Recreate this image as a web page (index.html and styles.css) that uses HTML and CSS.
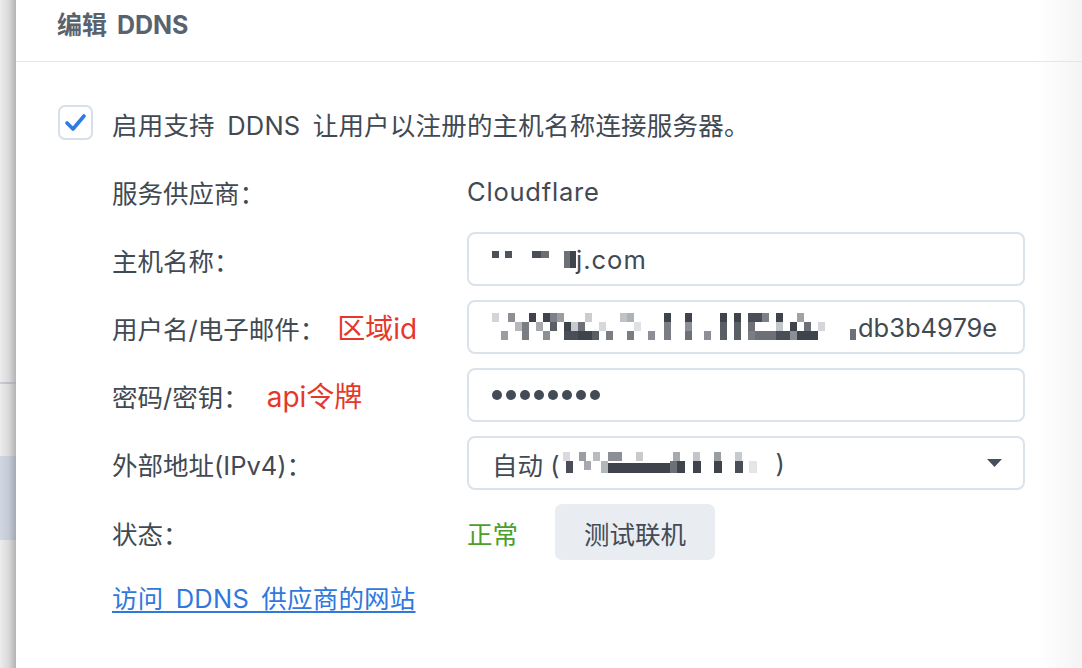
FILE: index.html
```html
<!DOCTYPE html>
<html lang="zh-CN">
<head>
<meta charset="utf-8">
<title>编辑 DDNS</title>
<link rel="stylesheet" href="styles.css">
</head>
<body>
<div class="page">
  <div class="side">
    <div class="side-a"></div>
    <div class="side-line"></div>
    <div class="side-b"></div>
    <div class="side-sel"></div>
    <div class="side-c"></div>
  </div>
  <div class="dialog">
    <div class="header">编辑 DDNS</div>
    <div class="content">
      <div class="check-row">
        <span class="checkbox">
          <svg width="25" height="25" viewBox="0 0 25 25"><path d="M4 13 L10 19 L21 6" fill="none" stroke="#2f7be0" stroke-width="3.6" stroke-linecap="round" stroke-linejoin="round"/></svg>
        </span>
        <span class="check-text">启用支持 DDNS 让用户以注册的主机名称连接服务器。</span>
      </div>

      <div class="form">
        <div class="label">服务供应商：</div>
        <div class="value">Cloudflare</div>

        <div class="label">主机名称：</div>
        <div class="field">
          <svg class="redact" width="84" height="22" viewBox="0 0 84 22">
            <rect x="0" y="3" width="7" height="7" fill="#4b5058"/>
            <rect x="13" y="3" width="7" height="7" fill="#50555d"/>
            <rect x="40" y="3" width="9" height="7" fill="#4a4f57"/>
            <rect x="49" y="3" width="8" height="7" fill="#6a6f76"/>
            <rect x="72" y="3" width="6" height="17" fill="#6c7077"/>
            <rect x="78" y="3" width="6" height="17" fill="#3f444c"/>
          </svg><span class="latin">j.com</span>
        </div>

        <div class="label">用户名/电子邮件：<span class="note note-a">区域id</span></div>
        <div class="field">
          <svg class="redact" width="366" height="28" viewBox="0 0 366 28">
            <rect x="0" y="0" width="7" height="9" fill="#d2d4d7"/>
            <rect x="16" y="0" width="7" height="9" fill="#8c9096"/>
            <rect x="37" y="0" width="7" height="9" fill="#3f444c"/>
            <rect x="51" y="0" width="7" height="9" fill="#3f444c"/>
            <rect x="58" y="0" width="7" height="9" fill="#7d8187"/>
            <rect x="65" y="0" width="7" height="9" fill="#9a9ea3"/>
            <rect x="93" y="0" width="7" height="9" fill="#c9ccd0"/>
            <rect x="128" y="0" width="7" height="9" fill="#bfc2c6"/>
            <rect x="135" y="0" width="7" height="9" fill="#aeb1b5"/>
            <rect x="172" y="0" width="7" height="9" fill="#3f444c"/>
            <rect x="193" y="0" width="7" height="9" fill="#3f444c"/>
            <rect x="228" y="0" width="7" height="9" fill="#3f444c"/>
            <rect x="242" y="0" width="7" height="9" fill="#3f444c"/>
            <rect x="256" y="0" width="14" height="9" fill="#4a4f57"/>
            <rect x="270" y="0" width="7" height="9" fill="#7d8187"/>
            <rect x="284" y="0" width="7" height="9" fill="#3f444c"/>
            <rect x="305" y="0" width="7" height="9" fill="#9fa3a8"/>
            <rect x="23" y="9" width="7" height="9" fill="#b5b8bc"/>
            <rect x="30" y="9" width="7" height="9" fill="#7a7e84"/>
            <rect x="44" y="9" width="7" height="9" fill="#a6a9ad"/>
            <rect x="58" y="9" width="7" height="9" fill="#5a5f66"/>
            <rect x="72" y="9" width="7" height="9" fill="#3f444c"/>
            <rect x="79" y="9" width="7" height="9" fill="#c8cbce"/>
            <rect x="86" y="9" width="7" height="9" fill="#6d7177"/>
            <rect x="107" y="9" width="7" height="9" fill="#d6d8db"/>
            <rect x="142" y="9" width="7" height="9" fill="#dfe1e3"/>
            <rect x="172" y="9" width="7" height="9" fill="#7a7e84"/>
            <rect x="193" y="9" width="7" height="9" fill="#8c9096"/>
            <rect x="228" y="9" width="7" height="9" fill="#5a5f66"/>
            <rect x="242" y="9" width="7" height="9" fill="#5a5f66"/>
            <rect x="256" y="9" width="7" height="9" fill="#6d7177"/>
            <rect x="284" y="9" width="7" height="9" fill="#c3c6ca"/>
            <rect x="298" y="9" width="7" height="9" fill="#3f444c"/>
            <rect x="312" y="9" width="7" height="9" fill="#6d7177"/>
            <rect x="326" y="9" width="7" height="9" fill="#d4d6d9"/>
            <rect x="9" y="18" width="7" height="9" fill="#9a9ea3"/>
            <rect x="30" y="18" width="7" height="9" fill="#7a7e84"/>
            <rect x="51" y="18" width="7" height="9" fill="#8c9096"/>
            <rect x="72" y="18" width="14" height="9" fill="#4a4f57"/>
            <rect x="86" y="18" width="14" height="9" fill="#3f444c"/>
            <rect x="100" y="18" width="7" height="9" fill="#5a5f66"/>
            <rect x="114" y="18" width="7" height="9" fill="#7a7e84"/>
            <rect x="135" y="18" width="7" height="9" fill="#7a7e84"/>
            <rect x="156" y="18" width="7" height="9" fill="#8c9096"/>
            <rect x="172" y="18" width="7" height="9" fill="#7a7e84"/>
            <rect x="193" y="18" width="7" height="9" fill="#6d7177"/>
            <rect x="212" y="18" width="7" height="9" fill="#8c9096"/>
            <rect x="228" y="18" width="7" height="9" fill="#5a5f66"/>
            <rect x="242" y="18" width="7" height="9" fill="#5a5f66"/>
            <rect x="256" y="18" width="7" height="9" fill="#7a7e84"/>
            <rect x="263" y="18" width="21" height="9" fill="#6d7177"/>
            <rect x="284" y="18" width="14" height="9" fill="#4a4f57"/>
            <rect x="298" y="18" width="7" height="9" fill="#8c9096"/>
            <rect x="305" y="18" width="21" height="9" fill="#3f444c"/>
            <rect x="358" y="16" width="6" height="11" fill="#6d7177"/>
          </svg><span>db3b4979e</span>
        </div>

        <div class="label">密码/密钥：<span class="note note-b">api令牌</span></div>
        <div class="field">
          <span class="dots"><i></i><i></i><i></i><i></i><i></i><i></i><i></i><i></i></span>
        </div>

        <div class="label">外部地址(IPv4)：</div>
        <div class="field select">
          <span class="sel-text">自动 (<svg class="redact" width="210" height="26" viewBox="0 0 210 26">
            <rect x="0" y="2" width="7" height="9" fill="#d8dadd"/>
            <rect x="16" y="2" width="7" height="9" fill="#9a9ea3"/>
            <rect x="30" y="2" width="7" height="9" fill="#b8bbbf"/>
            <rect x="45" y="2" width="14" height="9" fill="#8c9096"/>
            <rect x="73" y="2" width="7" height="9" fill="#c8cbce"/>
            <rect x="110" y="2" width="7" height="9" fill="#a6a9ad"/>
            <rect x="130" y="2" width="7" height="9" fill="#c2c5c9"/>
            <rect x="151" y="2" width="7" height="9" fill="#9a9ea3"/>
            <rect x="172" y="2" width="7" height="9" fill="#c8cbce"/>
            <rect x="3" y="11" width="7" height="12" fill="#4a4f57"/>
            <rect x="21" y="11" width="7" height="9" fill="#a6a9ad"/>
            <rect x="38" y="11" width="7" height="12" fill="#b3b6ba"/>
            <rect x="45" y="13" width="62" height="10" fill="#3f444c"/>
            <rect x="107" y="11" width="7" height="12" fill="#6d7177"/>
            <rect x="114" y="11" width="8" height="12" fill="#3f444c"/>
            <rect x="130" y="11" width="8" height="12" fill="#3f444c"/>
            <rect x="151" y="11" width="8" height="12" fill="#3f444c"/>
            <rect x="172" y="11" width="8" height="12" fill="#4a4f57"/>
            <rect x="186" y="11" width="8" height="12" fill="#e3e5e7"/>
          </svg> )</span>
          <svg class="arrow" width="15" height="8" viewBox="0 0 15 8"><path d="M0 0 H15 L7.5 8 Z" fill="#474f5a"/></svg>
        </div>

        <div class="label">状态：</div>
        <div class="status">
          <span class="ok">正常</span>
          <span class="btn">测试联机</span>
        </div>
      </div>

      <a class="link" href="#">访问 DDNS 供应商的网站</a>
    </div>
  </div>
</div>
</body>
</html>
```

FILE: styles.css
```css
html, body {
  margin: 0;
  padding: 0;
}
body {
  font-family: "Inter", "Noto Sans CJK SC", sans-serif;
  color: #414953;
  background: #fff;
}
.page {
  display: flex;
  width: 1082px;
  height: 668px;
  overflow: hidden;
}
.side {
  width: 16px;
  flex: none;
  display: flex;
  flex-direction: column;
}
.side > div {
  background: linear-gradient(to right, #ececec 0%, #d9d9d9 55%, #b3b3b3 100%);
}
.side-a { height: 382px; }
.side-line { height: 2px; background: linear-gradient(to right, #cdd1d6, #a9adb3) !important; }
.side-b { height: 72px; }
.side-sel { height: 84px; background: linear-gradient(to right, #d0d7e1 0%, #c3cad5 55%, #a3a9b4 100%) !important; }
.side-c { flex: 1; }

.dialog {
  flex: 1;
  display: flex;
  flex-direction: column;
  background: linear-gradient(to right, #fff calc(100% - 44px), #f4f4f4 100%);
}
.header {
  height: 62px;
  box-sizing: border-box;
  padding: 9px 0 0 41px;
  font-size: 25px;
  line-height: 32px;
  font-weight: 700;
  word-spacing: 4px;
  color: #59626d;
  border-bottom: 1px solid #e2e7ed;
  flex: none;
}
.content {
  padding: 43px 0 0 41px;
}
.check-row {
  display: flex;
  align-items: center;
  gap: 19px;
  height: 35px;
  padding-left: 1px;
}
.checkbox {
  width: 35px;
  height: 35px;
  box-sizing: border-box;
  border: 2px solid #d7dfe9;
  border-radius: 7px;
  display: flex;
  align-items: center;
  justify-content: center;
  flex: none;
}
.check-text {
  font-size: 25.5px;
  line-height: 36px;
  word-spacing: 5px;
  letter-spacing: 0.2px;
  position: relative;
  top: 3px;
}
.form {
  margin: 24px 0 0 55px;
  display: grid;
  grid-template-columns: 355px 558px;
  grid-template-rows: repeat(5, 54px) 56px;
  row-gap: 14px;
  font-size: 25.5px;
}
.label {
  display: flex;
  align-items: center;
}
.note {
  color: #e5382b;
  font-size: 28px;
}
.note-a { margin-left: 12px; }
.note-b { margin-left: 18px; }
.value {
  display: flex;
  align-items: center;
  letter-spacing: 0.8px;
}
.latin {
  letter-spacing: 1px;
}
.field {
  box-sizing: border-box;
  border: 2px solid #dae2eb;
  border-radius: 8px;
  display: flex;
  align-items: center;
  padding-left: 23px;
  white-space: nowrap;
}
.redact {
  flex: none;
  vertical-align: middle;
}
.dots {
  display: flex;
  gap: 4px;
}
.dots i {
  width: 10px;
  height: 10px;
  border-radius: 50%;
  background: #434b56;
}
.select {
  justify-content: space-between;
  padding-right: 21px;
}
.sel-text {
  display: flex;
  align-items: center;
}
.sel-text .redact {
  margin: 0 2px 0 4px;
}
.status {
  display: flex;
  align-items: center;
  gap: 37px;
}
.ok {
  color: #4a9f2c;
}
.btn {
  width: 160px;
  height: 56px;
  border-radius: 7px;
  background: #e9edf1;
  display: flex;
  align-items: center;
  justify-content: center;
  color: #434b55;
}
.link {
  display: inline-block;
  margin: 23px 0 0 55px;
  font-size: 25.5px;
  line-height: 32px;
  word-spacing: 5px;
  letter-spacing: 0.2px;
  color: #2f78de;
  text-decoration: underline;
  text-underline-offset: 3px;
}
```
